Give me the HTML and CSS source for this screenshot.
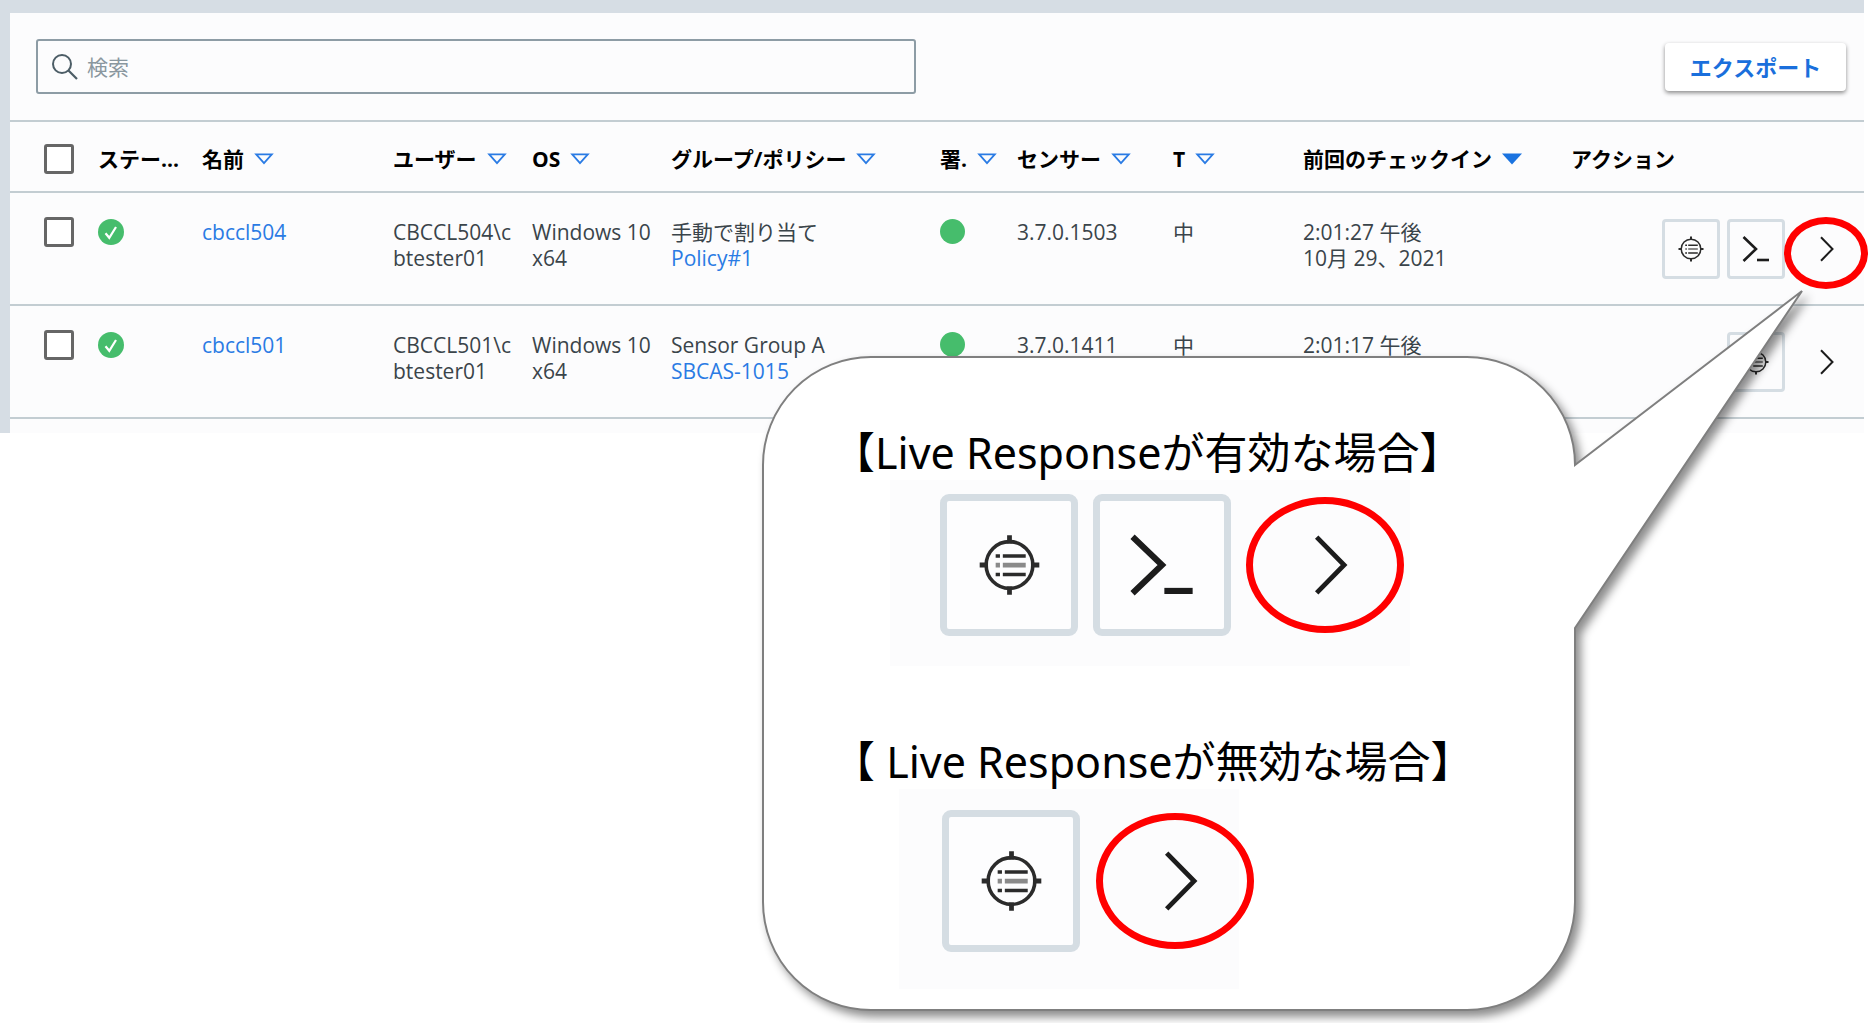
FILE: index.html
```html
<!DOCTYPE html>
<html lang="ja">
<head>
<meta charset="utf-8">
<title>エンドポイント</title>
<link rel="stylesheet" href="styles.css">
</head>
<body>
<svg class="defs" aria-hidden="true">
  <symbol id="i-query" viewBox="0 0 26 26">
    <g fill="none" stroke="#2b2b2b" stroke-width="1.5">
      <circle cx="13" cy="13" r="9.8"/>
      <path d="M13 0.5v3.5M13 22v3.5M0.5 13h3.5M22 13h3.5" stroke-width="2"/>
      <path d="M7.2 9.2h1.8M10.2 9.2h9.6M7.2 17h1.8M10.2 17h9.6"/>
      <path d="M7.2 13.1h1.8M10.2 13.1h9.6" stroke="#8a8a8a" stroke-width="2"/>
    </g>
  </symbol>
  <symbol id="i-terminal" viewBox="0 0 28 26">
    <path d="M1.5 1L14 13L1.5 25" fill="none" stroke="#1c1c1c" stroke-width="2.6"/>
    <path d="M15 24h12" stroke="#1c1c1c" stroke-width="2.6"/>
  </symbol>
  <symbol id="i-chevron" viewBox="0 0 14 26">
    <path d="M1 1.3L12.5 13L1 24.7" fill="none" stroke="#1c1c1c" stroke-width="2"/>
  </symbol>
  <symbol id="i-sort" viewBox="0 0 20 12">
    <path d="M2.2 1.3h15.6L10 10.2z" fill="none" stroke="#2a7be4" stroke-width="1.8"/>
  </symbol>
  <symbol id="i-sorted" viewBox="0 0 20 12">
    <path d="M0 0.5h20L10 11.5z" fill="#1a73e0"/>
  </symbol>
  <symbol id="i-ok" viewBox="0 0 26 26">
    <circle cx="13" cy="13" r="13" fill="#46bd6c"/>
    <path d="M7.5 14.2l3.8 4.6L18 8" fill="none" stroke="#fff" stroke-width="2.2"/>
  </symbol>
</svg>

<main class="page">
  <section class="panel">
    <div class="toolbar">
      <label class="search">
        <svg viewBox="0 0 26 26" aria-hidden="true"><circle cx="10" cy="10" r="9" fill="none" stroke="#4c5d66" stroke-width="2"/><path d="M16.5 16.5L25 25" stroke="#4c5d66" stroke-width="2.2"/></svg>
        <input type="search" placeholder="検索" aria-label="検索">
      </label>
      <button class="export" type="button">エクスポート</button>
    </div>
    <table class="grid">
      <colgroup>
        <col class="c-check"><col class="c-status"><col class="c-name"><col class="c-user"><col class="c-os"><col class="c-group"><col class="c-sig"><col class="c-sensor"><col class="c-target"><col class="c-time"><col>
      </colgroup>
      <thead>
        <tr>
          <th><input class="tick" type="checkbox" aria-label="すべて選択"></th>
          <th><span>ステー...</span></th>
          <th><span>名前<svg class="sort"><use href="#i-sort"/></svg></span></th>
          <th><span>ユーザー<svg class="sort"><use href="#i-sort"/></svg></span></th>
          <th><span>OS<svg class="sort"><use href="#i-sort"/></svg></span></th>
          <th><span>グループ/ポリシー<svg class="sort"><use href="#i-sort"/></svg></span></th>
          <th><span>署.<svg class="sort"><use href="#i-sort"/></svg></span></th>
          <th><span>センサー<svg class="sort"><use href="#i-sort"/></svg></span></th>
          <th><span>T<svg class="sort"><use href="#i-sort"/></svg></span></th>
          <th><span>前回のチェックイン<svg class="sort"><use href="#i-sorted"/></svg></span></th>
          <th><span>アクション</span></th>
        </tr>
      </thead>
      <tbody>
        <tr>
          <td><input class="tick" type="checkbox" aria-label="cbccl504"></td>
          <td><svg class="ok"><use href="#i-ok"/></svg></td>
          <td><a href="#">cbccl504</a></td>
          <td>CBCCL504\c<br>btester01</td>
          <td>Windows 10<br>x64</td>
          <td>手動で割り当て<br><a href="#">Policy#1</a></td>
          <td><span class="dot"></span></td>
          <td>3.7.0.1503</td>
          <td>中</td>
          <td>2:01:27 午後<br>10月 29、2021</td>
          <td>
            <div class="actions">
              <button class="box" type="button" aria-label="クエリ"><svg class="query"><use href="#i-query"/></svg></button>
              <button class="box" type="button" aria-label="Live Response"><svg class="terminal"><use href="#i-terminal"/></svg></button>
              <button class="more" type="button" aria-label="詳細"><svg class="chevron"><use href="#i-chevron"/></svg><span class="mark"></span></button>
            </div>
          </td>
        </tr>
        <tr>
          <td><input class="tick" type="checkbox" aria-label="cbccl501"></td>
          <td><svg class="ok"><use href="#i-ok"/></svg></td>
          <td><a href="#">cbccl501</a></td>
          <td>CBCCL501\c<br>btester01</td>
          <td>Windows 10<br>x64</td>
          <td>Sensor Group A<br><a href="#">SBCAS-1015</a></td>
          <td><span class="dot"></span></td>
          <td>3.7.0.1411</td>
          <td>中</td>
          <td>2:01:17 午後</td>
          <td>
            <div class="actions">
              <button class="box" type="button" aria-label="クエリ"><svg class="query"><use href="#i-query"/></svg></button>
              <button class="more" type="button" aria-label="詳細"><svg class="chevron"><use href="#i-chevron"/></svg></button>
            </div>
          </td>
        </tr>
      </tbody>
    </table>
  </section>

  <aside class="callout">
    <svg class="bubble" viewBox="0 0 1042 721" aria-hidden="true">
      <path d="M109 67H705A108 108 0 0 1 813 175L1040 1L813 338V612A108 108 0 0 1 705 720H109A108 108 0 0 1 1 612V175A108 108 0 0 1 109 67Z" fill="#fff" stroke="#7f7f7f" stroke-width="2"/>
    </svg>
    <section class="case">
      <h2>【Live Responseが有効な場合】</h2>
      <div class="sample wide">
        <span class="big"><svg class="query"><use href="#i-query"/></svg></span>
        <span class="big"><svg class="terminal"><use href="#i-terminal"/></svg></span>
        <span class="ring"><svg class="chevron"><use href="#i-chevron"/></svg></span>
      </div>
    </section>
    <section class="case">
      <h2>【 Live Responseが無効な場合】</h2>
      <div class="sample">
        <span class="big"><svg class="query"><use href="#i-query"/></svg></span>
        <span class="ring"><svg class="chevron"><use href="#i-chevron"/></svg></span>
      </div>
    </section>
  </aside>
</main>
</body>
</html>
```
FILE: styles.css
```css
* { box-sizing: border-box; }

body {
  margin: 0;
  background: #fff;
  color: #3a444a;
  font: 21px/26px "Open Sans", "Noto Sans CJK JP", sans-serif;
}

svg { display: block; }
.defs { position: absolute; width: 0; height: 0; }
a { color: #2a7be4; text-decoration: none; }
button { font: inherit; padding: 0; }

.page { position: relative; min-height: 100vh; padding-right: 8px; }

.panel {
  border: solid #d6dde4;
  border-width: 13px 0 0 10px;
  background: #fcfcfd;
  padding-bottom: 14px;
}

.toolbar {
  display: flex;
  justify-content: space-between;
  align-items: center;
  height: 107px;
  padding: 0 18px 0 26px;
}

.search {
  display: flex;
  align-items: center;
  gap: 9px;
  width: 880px;
  height: 55px;
  padding: 0 14px;
  border: 2px solid #8d9ca5;
  border-radius: 3px;
}
.search svg { width: 26px; height: 26px; flex: none; }
.search input {
  flex: 1;
  border: 0;
  padding: 0;
  outline: 0;
  background: none;
  font: inherit;
}
.search input::placeholder { color: #8a979f; opacity: 1; }

.export {
  width: 181px;
  height: 48px;
  border: 0;
  border-radius: 4px;
  background: #fff;
  color: #1a6fdc;
  font-size: 22px;
  font-weight: 700;
  box-shadow: 0 2px 4px rgba(0, 0, 0, .45);
}

.grid {
  width: 100%;
  table-layout: fixed;
  border-collapse: collapse;
}
.c-check { width: 88px; }
.c-status { width: 104px; }
.c-name { width: 191px; }
.c-user { width: 139px; }
.c-os { width: 139px; }
.c-group { width: 269px; }
.c-sig { width: 77px; }
.c-sensor { width: 156px; }
.c-target { width: 130px; }
.c-time { width: 268px; }

th, td { padding: 0; text-align: left; }
tr { border-top: 2px solid #c3cdd2; }
tbody tr:last-child { border-bottom: 2px solid #c3cdd2; }
th { height: 71px; padding-top: 4px; color: #000; font-weight: 700; white-space: nowrap; }
th span { display: flex; align-items: center; gap: 10px; }
td { height: 113px; padding-top: 26px; vertical-align: top; }
th:first-child, td:first-child { padding-left: 34px; }
td:first-child { padding-top: 24px; }

.sort { width: 20px; height: 12px; }
.tick {
  appearance: none;
  display: block;
  width: 30px;
  height: 30px;
  margin: 0;
  border: 3px solid #666;
  border-radius: 3px;
  background: #fff;
}
.ok { width: 26px; height: 26px; }
.dot { display: block; width: 25px; height: 25px; border-radius: 50%; background: #46bd6c; }

.actions { display: flex; justify-content: flex-end; gap: 7px; }
.box, .more {
  display: flex;
  align-items: center;
  justify-content: center;
  width: 58px;
  height: 60px;
  background: none;
  border: 0;
}
.box { border: 3px solid #d5dde3; border-radius: 4px; }
.more { position: relative; width: 72px; padding-right: 3px; }
.query { width: 26px; height: 26px; }
.terminal { width: 28px; height: 26px; }
.chevron { width: 14px; height: 26px; }
.mark {
  position: absolute;
  inset: -2px -4px -10px -8px;
  border: 7px solid #f00;
  border-radius: 50%;
}

.callout {
  position: absolute;
  left: 762px;
  top: 290px;
  width: 814px;
  padding: 136px 0 0 70px;
  color: #000;
}
.bubble {
  position: absolute;
  left: 0;
  top: 0;
  width: 1042px;
  height: 721px;
  overflow: visible;
  filter: drop-shadow(5px 6px 5px rgba(0, 0, 0, .45));
}
.case { position: relative; height: 309px; }
.case h2 {
  margin: 0;
  font: 400 43px/54px "Noto Sans", "Noto Sans CJK JP", sans-serif;
  white-space: nowrap;
}
.sample {
  display: flex;
  align-items: center;
  gap: 16px;
  width: 340px;
  height: 200px;
  margin-left: 67px;
  padding: 0 0 16px 43px;
  background: #fcfcfd;
}
.sample.wide { gap: 15px; width: 520px; height: 186px; margin-left: 58px; padding-left: 50px; }
.big, .ring { display: flex; align-items: center; justify-content: center; flex: none; }
.big { width: 138px; height: 142px; border: 7px solid #d5dde3; border-radius: 9px; background: #fdfdfe; }
.ring { width: 158px; height: 136px; padding-left: 12px; border: 7px solid #f00; border-radius: 50%; }
.sample .query { width: 63px; height: 62px; }
.sample .terminal { width: 66px; height: 62px; }
.sample .chevron { width: 34px; height: 62px; }
```
